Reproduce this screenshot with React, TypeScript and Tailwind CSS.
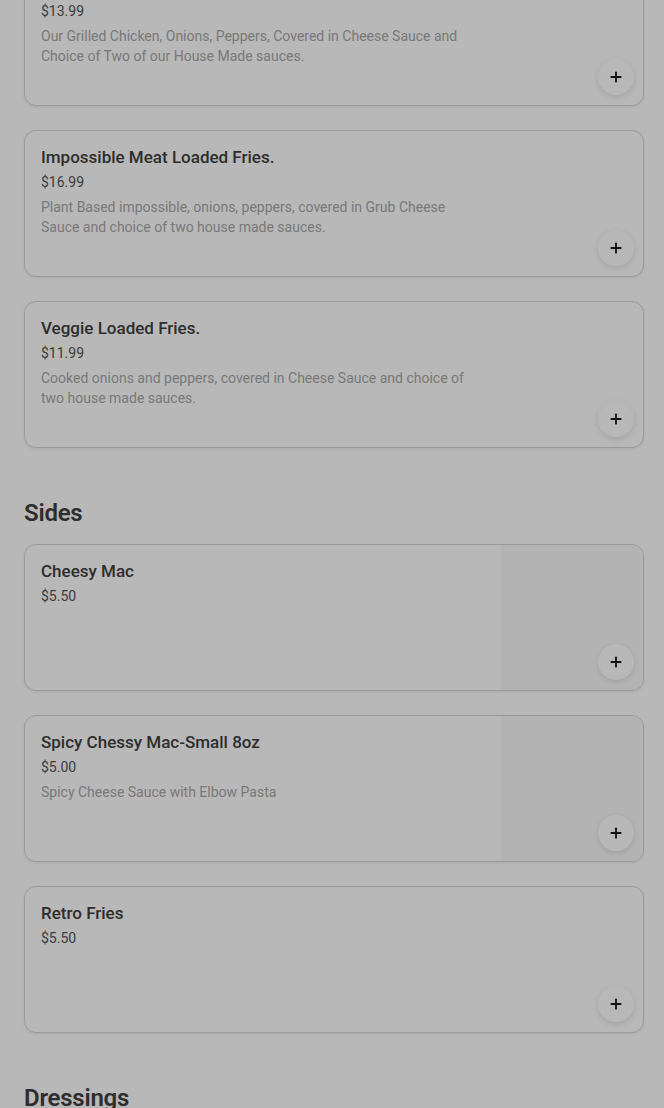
import { Plus } from "lucide-react";

type Item = {
  name: string;
  price: string;
  description?: string;
  image?: boolean;
};

const topItems: Item[] = [
  {
    name: "Chicken Loaded Fries.",
    price: "$13.99",
    description: "Our Grilled Chicken, Onions, Peppers, Covered in Cheese Sauce and Choice of Two of our House Made sauces.",
  },
  {
    name: "Impossible Meat Loaded Fries.",
    price: "$16.99",
    description: "Plant Based impossible, onions, peppers, covered in Grub Cheese Sauce and choice of two house made sauces.",
  },
  {
    name: "Veggie Loaded Fries.",
    price: "$11.99",
    description: "Cooked onions and peppers, covered in Cheese Sauce and choice of two house made sauces.",
  },
];

const sides: Item[] = [
  { name: "Cheesy Mac", price: "$5.50", image: true },
  { name: "Spicy Chessy Mac-Small 8oz", price: "$5.00", description: "Spicy Cheese Sauce with Elbow Pasta", image: true },
  { name: "Retro Fries", price: "$5.50" },
];

const MenuCard = ({ item }: { item: Item }) => (
  <div className="relative flex h-[147px] overflow-hidden rounded-xl border border-[#d6d6d6] bg-white shadow-[0_1px_3px_rgba(0,0,0,0.08)]">
    <div className="flex-1 pl-4 pr-6 pt-[14px]">
      <p className="text-[17px] leading-6 font-medium text-[#3f3f3f]">{item.name}</p>
      <p className="mt-[3px] text-sm leading-5 text-[#555]">{item.price}</p>
      {item.description && (
        <p className="mt-[5px] text-sm leading-5 text-[#a8a8a8]">{item.description}</p>
      )}
    </div>
    <div className={`w-[142px] shrink-0 ${item.image ? "bg-[#f9f9f9]" : ""}`} />
    <button className="absolute right-[9px] bottom-[10px] flex h-9 w-9 items-center justify-center rounded-full bg-white shadow-[0_2px_6px_rgba(0,0,0,0.12)]">
      <Plus size={16} strokeWidth={2.75} className="text-[#1a1a1a]" />
    </button>
  </div>
);

const App = () => {
  return (
    <div className="relative min-h-[1108px] bg-white font-['Roboto','Liberation_Sans',sans-serif]">
      <div className="-mt-[41px] pl-6 pr-5">
        <div className="flex flex-col gap-6">
          {topItems.map((item) => (
            <MenuCard key={item.name} item={item} />
          ))}
        </div>

        <h2 className="mt-[49px] mb-[15px] text-2xl leading-8 font-semibold tracking-[-0.01em] text-[#3f3f3f]">Sides</h2>
        <div className="flex flex-col gap-6">
          {sides.map((item) => (
            <MenuCard key={item.name} item={item} />
          ))}
        </div>

        <h2 className="mt-[49px] text-2xl leading-8 font-semibold tracking-[-0.01em] text-[#3f3f3f]">Dressings</h2>
      </div>
      <div className="fixed inset-0 bg-black/[0.28]" />
    </div>
  );
};

export default App;
